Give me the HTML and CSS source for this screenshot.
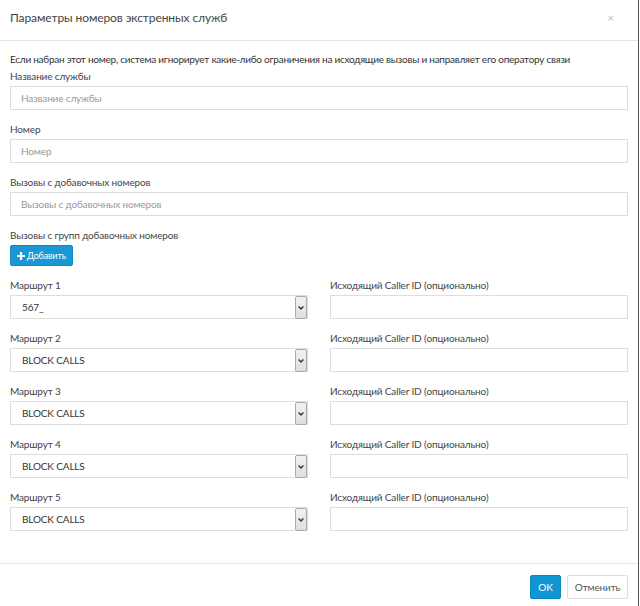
FILE: index.html
```html
<!DOCTYPE html>
<html lang="ru">
<head>
<meta charset="utf-8">
<title>Параметры номеров экстренных служб</title>
<link rel="stylesheet" href="styles.css">
</head>
<body>
<div class="modal">
  <div class="modal-header">
    <h4 class="modal-title">Параметры номеров экстренных служб</h4>
    <span class="close">×</span>
  </div>
  <div class="modal-body">
    <p class="info">Если набран этот номер, система игнорирует какие-либо ограничения на исходящие вызовы и направляет его оператору связи</p>
    <div class="form-group">
      <label class="label">Название службы</label>
      <div class="input placeholder">Название службы</div>
    </div>
    <div class="form-group">
      <label class="label">Номер</label>
      <div class="input placeholder">Номер</div>
    </div>
    <div class="form-group">
      <label class="label">Вызовы с добавочных номеров</label>
      <div class="input placeholder">Вызовы с добавочных номеров</div>
    </div>
    <div class="form-group">
      <label class="label">Вызовы с групп добавочных номеров</label>
      <div><button class="btn btn-add"><svg class="plus" viewBox="0 0 8 8" width="8" height="8"><path d="M2.9 0h2.2v2.9H8v2.2H5.1V8H2.9V5.1H0V2.9h2.9z" fill="#fff"/></svg>Добавить</button></div>
    </div>
    <div class="routes">
      <div class="form-group">
        <label class="label">Маршрут 1</label>
        <div class="select"><span class="value">567_</span><span class="caret"><svg viewBox="0 0 6 4" width="6" height="4"><path d="M0.6 0.6L3 3L5.4 0.6" fill="none" stroke="#333" stroke-width="1.4"/></svg></span></div>
      </div>
      <div class="form-group">
        <label class="label">Исходящий Caller ID (опционально)</label>
        <div class="input"></div>
      </div>
      <div class="form-group">
        <label class="label">Маршрут 2</label>
        <div class="select"><span class="value">BLOCK CALLS</span><span class="caret"><svg viewBox="0 0 6 4" width="6" height="4"><path d="M0.6 0.6L3 3L5.4 0.6" fill="none" stroke="#333" stroke-width="1.4"/></svg></span></div>
      </div>
      <div class="form-group">
        <label class="label">Исходящий Caller ID (опционально)</label>
        <div class="input"></div>
      </div>
      <div class="form-group">
        <label class="label">Маршрут 3</label>
        <div class="select"><span class="value">BLOCK CALLS</span><span class="caret"><svg viewBox="0 0 6 4" width="6" height="4"><path d="M0.6 0.6L3 3L5.4 0.6" fill="none" stroke="#333" stroke-width="1.4"/></svg></span></div>
      </div>
      <div class="form-group">
        <label class="label">Исходящий Caller ID (опционально)</label>
        <div class="input"></div>
      </div>
      <div class="form-group">
        <label class="label">Маршрут 4</label>
        <div class="select"><span class="value">BLOCK CALLS</span><span class="caret"><svg viewBox="0 0 6 4" width="6" height="4"><path d="M0.6 0.6L3 3L5.4 0.6" fill="none" stroke="#333" stroke-width="1.4"/></svg></span></div>
      </div>
      <div class="form-group">
        <label class="label">Исходящий Caller ID (опционально)</label>
        <div class="input"></div>
      </div>
      <div class="form-group">
        <label class="label">Маршрут 5</label>
        <div class="select"><span class="value">BLOCK CALLS</span><span class="caret"><svg viewBox="0 0 6 4" width="6" height="4"><path d="M0.6 0.6L3 3L5.4 0.6" fill="none" stroke="#333" stroke-width="1.4"/></svg></span></div>
      </div>
      <div class="form-group">
        <label class="label">Исходящий Caller ID (опционально)</label>
        <div class="input"></div>
      </div>
    </div>
  </div>
  <div class="modal-footer">
    <button class="btn btn-ok">OK</button>
    <button class="btn btn-cancel">Отменить</button>
  </div>
</div>
</body>
</html>
```
FILE: styles.css
```css
html, body {
  margin: 0;
  padding: 0;
  background: #fff;
}
body {
  font-family: Lato, "Open Sans", sans-serif;
  font-size: 10px;
  letter-spacing: -0.15px;
  color: #333;
}
.modal {
  width: 639px;
  min-height: 606px;
  box-sizing: border-box;
  border-right: 1px solid #555;
  background: #fff;
  display: flex;
  flex-direction: column;
}
.modal-header {
  flex-shrink: 0;
  height: 41px;
  box-sizing: border-box;
  border-bottom: 1px solid #e5e5e5;
  display: flex;
  align-items: center;
  justify-content: space-between;
  padding: 0 24px 5px 10px;
}
.modal-title {
  margin: 0;
  font-size: 12px;
  letter-spacing: -0.1px;
  font-weight: normal;
  color: #444;
}
.close {
  color: #c4c4c4;
  font-size: 12px;
}
.modal-body {
  flex-shrink: 0;
  padding: 11px 10px 19px 10px;
}
.info {
  margin: 0 0 2px 0;
  line-height: 15px;
  letter-spacing: -0.25px;
  color: #333;
}
.form-group {
  display: flex;
  flex-direction: column;
  margin-bottom: 12px;
}
.label {
  line-height: 15px;
  margin-bottom: 2px;
  color: #444;
}
.input {
  height: 24px;
  box-sizing: border-box;
  border: 1px solid #ddd;
  padding: 0 10px;
  display: flex;
  align-items: center;
  color: #333;
}
.placeholder {
  color: #999;
}
.btn {
  font-family: inherit;
  letter-spacing: -0.15px;
  border-radius: 2px;
  cursor: pointer;
}
.btn-add {
  height: 21px;
  padding: 0 6px 0 6px;
  background: #1a98d5;
  border: 1px solid #1488c2;
  color: #fff;
  font-size: 9px;
  display: inline-flex;
  align-items: center;
  gap: 2px;
}
.routes {
  display: grid;
  grid-template-columns: 298px 298px;
  column-gap: 22px;
}
.select {
  height: 24px;
  box-sizing: border-box;
  border: 1px solid #ddd;
  display: flex;
  align-items: stretch;
}
.select .value {
  flex: 1;
  display: flex;
  align-items: center;
  padding-left: 11px;
  color: #333;
}
.caret {
  width: 10px;
  margin: 0 0 -1px 0;
  border: 1px solid #aaa;
  border-radius: 2px;
  background: linear-gradient(#f2f2f2, #dedede);
  display: flex;
  align-items: center;
  justify-content: center;
}
.modal-footer {
  flex-shrink: 0;
  border-top: 1px solid #e5e5e5;
  margin-top: auto;
  padding: 11px 10px 0 0;
  height: 43px;
  box-sizing: border-box;
  display: flex;
  justify-content: flex-end;
  align-items: flex-start;
  gap: 6px;
}
.btn-ok {
  height: 24px;
  width: 31px;
  padding: 0;
  background: #0f97d4;
  border: 1px solid #0b85bd;
  color: #fff;
  font-size: 10px;
}
.btn-cancel {
  height: 24px;
  width: 61px;
  padding: 0;
  background: #fff;
  border: 1px solid #ddd;
  color: #555;
  font-size: 10px;
}
```
